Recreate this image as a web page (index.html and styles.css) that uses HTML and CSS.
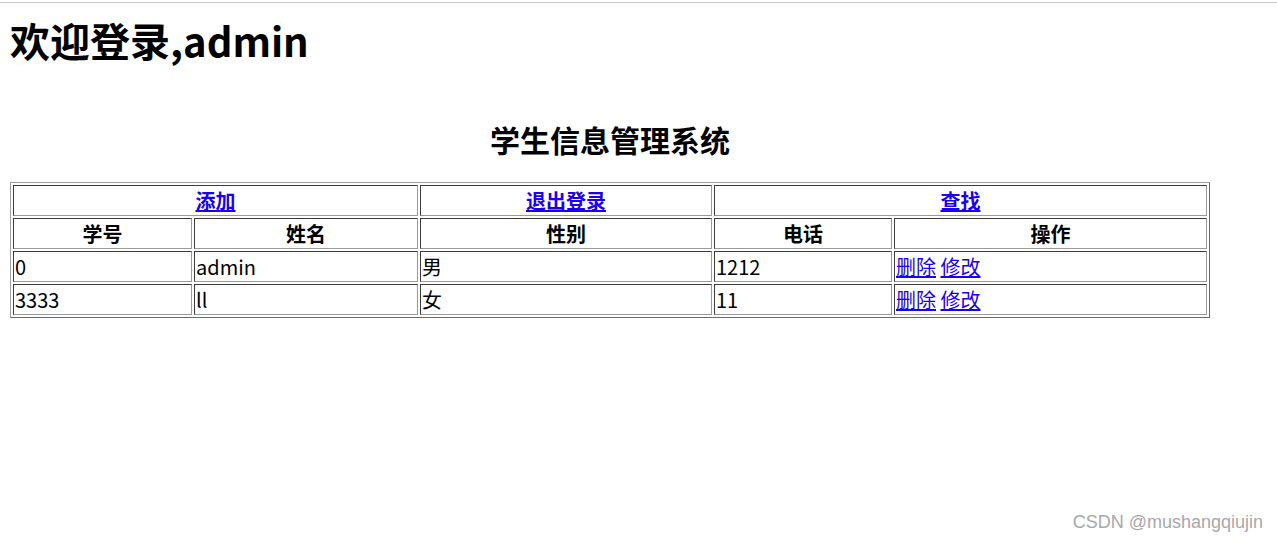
FILE: index.html
```html
<!DOCTYPE html>
<html lang="zh-CN">
<head>
    <meta charset="UTF-8">
    <title>学生信息管理系统</title>
    <link rel="stylesheet" href="styles.css">
</head>
<body>
    <div class="topline"></div>
    <h1>欢迎登录,admin</h1>

    <div class="main">
        <h2>学生信息管理系统</h2>
        <table class="stu-table">
            <colgroup>
                <col class="c-id">
                <col class="c-name">
                <col class="c-sex">
                <col class="c-tel">
                <col class="c-op">
            </colgroup>
            <tr>
                <th colspan="2"><a href="#">添加</a></th>
                <th><a href="#">退出登录</a></th>
                <th colspan="2"><a href="#">查找</a></th>
            </tr>
            <tr>
                <th>学号</th>
                <th>姓名</th>
                <th>性别</th>
                <th>电话</th>
                <th>操作</th>
            </tr>
            <tr>
                <td>0</td>
                <td>admin</td>
                <td>男</td>
                <td>1212</td>
                <td><a href="#">删除</a> <a href="#">修改</a></td>
            </tr>
            <tr>
                <td>3333</td>
                <td>ll</td>
                <td>女</td>
                <td>11</td>
                <td><a href="#">删除</a> <a href="#">修改</a></td>
            </tr>
        </table>
    </div>

    <div class="watermark">CSDN @mushangqiujin</div>
</body>
</html>
```

FILE: styles.css
```css
* {
    box-sizing: border-box;
}

body {
    margin: 0;
    padding: 0 10px;
    font-family: "Noto Sans CJK SC", "Noto Sans", sans-serif;
    font-size: 20px;
    color: #000;
    background: #fff;
    min-height: 544px;
    position: relative;
}

.topline {
    height: 1px;
    margin: 2px -10px 0;
    background: #c8c8c8;
}

h1 {
    margin: 13px 0 0;
    font-size: 40px;
    line-height: 48px;
    font-weight: bold;
}

.main {
    width: 1200px;
}

h2 {
    margin: 57px 0 25px;
    font-size: 30px;
    line-height: 36px;
    text-align: center;
}

.stu-table {
    width: 1200px;
    table-layout: fixed;
    border-collapse: separate;
    border-spacing: 2px;
    border: 1px solid;
    border-color: #a0a0a0 #696969 #696969 #a0a0a0;
}

.stu-table th,
.stu-table td {
    border: 1px solid;
    border-color: #3c3c3c #9a9a9a #9a9a9a #3c3c3c;
    padding: 1px;
    height: 31px;
    line-height: 27px;
    overflow: hidden;
    white-space: nowrap;
}

.stu-table td {
    text-align: left;
}

.c-id { width: 179px; }
.c-name { width: 224px; }
.c-sex { width: 292px; }
.c-tel { width: 178px; }
.c-op { width: 313px; }

a {
    color: #1a00ee;
    text-decoration: underline;
}

.watermark {
    position: absolute;
    right: 14px;
    top: 512px;
    font-family: "Liberation Sans", Arial, sans-serif;
    font-size: 18px;
    color: #a8a8a8;
}
```
